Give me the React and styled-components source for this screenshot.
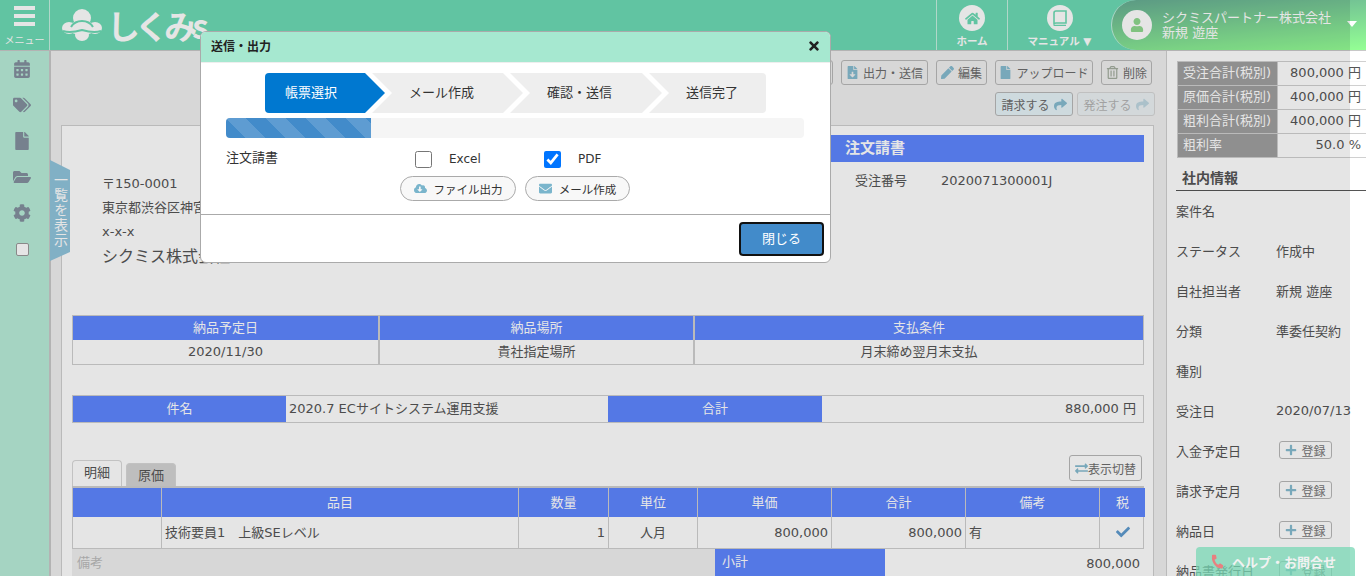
import React from 'react';
import styled, { createGlobalStyle } from 'styled-components';
import {
  FaHome, FaUser, FaCalendarAlt, FaTags, FaFile, FaFolderOpen, FaCog, FaPen, FaRegTrashAlt,
  FaShare, FaPlus, FaCheck, FaTimes, FaEnvelope, FaCloudDownloadAlt, FaPhone, FaExchangeAlt, FaFileDownload,
} from 'react-icons/fa';

const BLUE = '#5e86ff';

const GlobalStyle = createGlobalStyle`
  html, body {
    margin: 0;
    padding: 0;
    background: #fff;
    font-family: "DejaVu Sans", "Noto Sans CJK JP", sans-serif;
    font-size: 13px;
    color: #555;
  }
  * { box-sizing: border-box; }
`;

const Page = styled.div`
  position: relative;
  width: 1366px;
  height: 576px;
  overflow: hidden;
`;

const Header = styled.header`
  display: flex;
  height: 51px;
  background: #6ddbb5;
  border-bottom: 1px solid #c8c8c8;
`;

const MenuButton = styled.div`
  width: 50px;
  border-right: 1px solid #c5f0e0;
  display: flex;
  flex-direction: column;
  align-items: center;
  color: #fff;
  font-size: 10px;
  line-height: 12px;
  padding-top: 6px;
`;

const Burger = styled.div`
  width: 21px;
  height: 20px;
  margin-bottom: 9px;
  border-top: 4px solid #fff;
  border-bottom: 4px solid #fff;
  display: flex;
  align-items: center;
  &::before {
    content: '';
    width: 100%;
    height: 4px;
    background: #fff;
  }
`;

const Logo = styled.div`
  display: flex;
  align-items: center;
  gap: 5px;
  margin-left: 12px;
  color: #fff;
  font-size: 33px;
  font-weight: 700;
  letter-spacing: -5px;
  line-height: 50px;
  font-family: "Noto Sans CJK JP", sans-serif;
`;

const Spacer = styled.div`
  flex: 1;
`;

const NavItem = styled.div`
  width: ${p => p.$width}px;
  border-left: 1px solid #c5f0e0;
  display: flex;
  flex-direction: column;
  align-items: center;
  padding-top: 5px;
  color: #fff;
  font-size: 10.5px;
  font-weight: 700;
  line-height: 12px;
`;

const NavCircle = styled.div`
  width: 26px;
  height: 26px;
  border-radius: 50%;
  background: #fff;
  color: #6ddbb5;
  font-size: 15px;
  display: flex;
  align-items: center;
  justify-content: center;
  margin-bottom: 4px;
`;

const UserPill = styled.div`
  width: 255px;
  height: 50px;
  border-radius: 30px 0 0 30px;
  border-left: 1px solid #c5f0e0;
  background: linear-gradient(175deg, #66ab94, #94ff94);
  display: flex;
  align-items: center;
  padding-left: 10px;
  color: #fff;
  position: relative;
`;

const Avatar = styled.div`
  width: 30px;
  height: 30px;
  border-radius: 50%;
  background: #fff;
  color: #8fd88f;
  font-size: 14px;
  display: flex;
  align-items: center;
  justify-content: center;
  margin-right: 10px;
`;

const UserText = styled.div`
  font-size: 13px;
  line-height: 15px;
`;

const Caret = styled.span`
  position: absolute;
  right: 9px;
  top: 21px;
  border-left: 5px solid transparent;
  border-right: 5px solid transparent;
  border-top: 6px solid #fff;
`;

const Body = styled.div`
  display: flex;
  height: 525px;
`;

const Sidebar = styled.nav`
  width: 51px;
  flex: none;
  background: #b8edd9;
  border-right: 2px solid #c8c8c8;
  display: flex;
  flex-direction: column;
  padding: 9px 0 0 13px;
  gap: 18px;
  color: #84909f;
  font-size: 18px;
  svg { display: block; }
`;

const SideCheck = styled.div`
  width: 13px;
  height: 13px;
  margin: 3px 0 0 3px;
  background: #fff;
  border: 1px solid #999;
  border-radius: 2px;
`;

const ListTab = styled.div`
  position: absolute;
  left: 50px;
  top: 160px;
  width: 20px;
  height: 101px;
  background: #90c4dc;
  clip-path: polygon(0 0, 100% 10px, 100% 92px, 0 100%);
  color: #fff;
  font-size: 14px;
  line-height: 20px;
  letter-spacing: 1px;
  writing-mode: vertical-rl;
  display: flex;
  align-items: center;
  justify-content: center;
`;

const Main = styled.main`
  width: 1115px;
  flex: none;
  background: #f0f0f0;
  padding: 9px 0 0 10px;
  overflow: hidden;
`;

const Toolbar = styled.div`
  display: flex;
  flex-direction: column;
  align-items: flex-end;
  gap: 7px;
  margin-bottom: 9px;
`;

const ToolRow = styled.div`
  display: flex;
  gap: ${p => p.$gap}px;
  margin-right: ${p => p.$right}px;
`;

const ToolButton = styled.div`
  width: ${p => p.$width}px;
  height: 25px;
  border: 1px solid #b8b8b8;
  border-radius: 3px;
  display: flex;
  align-items: center;
  justify-content: center;
  gap: 4px;
  color: #6c6c6c;
  font-size: 12px;
  white-space: nowrap;
  svg { color: ${p => p.$iconColor || '#86bbd0'}; font-size: 13px; }
`;

const ActionButton = styled(ToolButton)`
  height: 24px;
  background: #e6f3f8;
  opacity: ${p => (p.$disabled ? 0.45 : 1)};
`;

const Sheet = styled.section`
  width: 1093px;
  background: #fff;
  border: 1px solid #d0d0d0;
  padding: 9px 9px 0 10px;
`;

const SheetTop = styled.div`
  display: grid;
  grid-template-columns: 1fr 314px;
  height: 134px;
`;

const Address = styled.div`
  padding: 37px 0 0 30px;
  line-height: 24px;
`;

const CompanyName = styled.div`
  font-size: 16px;
  line-height: 26px;
`;

const TitleBar = styled.div`
  height: 27px;
  background: ${BLUE};
  color: #fff;
  font-size: 15px;
  font-weight: 700;
  line-height: 27px;
  padding-left: 15px;
`;

const OrderNo = styled.div`
  display: flex;
  padding: 10px 0 0 25px;
  line-height: 18px;
  span:first-child { width: 86px; }
`;

const InfoGrid = styled.div`
  display: grid;
  grid-template-columns: ${p => p.$cols};
  border: 1px solid #d0d0d0;
  margin-top: ${p => p.$top}px;
`;

const HeadCell = styled.div`
  background: ${BLUE};
  color: #fff;
  text-align: ${p => (p.$indent ? 'left' : 'center')};
  height: ${p => p.$h || 24}px;
  line-height: ${p => p.$lh || p.$h || 24}px;
  border-right: ${p => (p.$split ? `${p.$split}px solid #d0d0d0` : 'none')};
  padding-left: ${p => p.$indent || 0}px;
`;

const Cell = styled.div`
  height: ${p => p.$h || 24}px;
  line-height: ${p => p.$h || 24}px;
  text-align: ${p => p.$align || 'center'};
  padding: 0 ${p => p.$pad || 3}px;
  border-right: ${p => (p.$split ? `${p.$split}px solid #d0d0d0` : 'none')};
  white-space: nowrap;
  overflow: hidden;
`;

const TabRow = styled.div`
  display: flex;
  align-items: flex-end;
  justify-content: space-between;
  height: 33px;
  margin-top: 32px;
  border-bottom: 2px solid #d0d0d0;
`;

const Tabs = styled.div`
  display: flex;
  align-items: flex-end;
  gap: 4px;
`;

const Tab = styled.div`
  width: 50px;
  height: ${p => (p.$active ? 26 : 23)}px;
  line-height: ${p => (p.$active ? 24 : 23)}px;
  text-align: center;
  border: 1px solid #d8d8d8;
  border-bottom: none;
  border-radius: 4px 4px 0 0;
  background: ${p => (p.$active ? '#fff' : '#d4d4d4')};
`;

const SwitchButton = styled(ToolButton)`
  width: 73px;
  height: 26px;
  margin: 0 2px 5px 0;
  gap: 0;
`;

const DetailGrid = styled.div`
  display: grid;
  grid-template-columns: 89px 357px 90px 89px 134px 134px 134px 45px;
  border-left: 1px solid #d0d0d0;
  border-right: 1px solid #d0d0d0;
`;

const TotalGrid = styled.div`
  display: grid;
  grid-template-columns: 643px 170px 1fr;
  border-top: 1px solid #d0d0d0;
`;

const MemoCell = styled.div`
  background: #f0f0f0;
  color: #bbb;
  padding: 3px 5px;
  height: 40px;
`;

const TaxMark = styled.span`
  color: #5f9bcf;
  font-size: 14px;
  vertical-align: -2px;
`;

const Aside = styled.aside`
  flex: 1;
  background: #fff;
  border-left: 1px solid #d0d0d0;
  padding: 10px 0 0 10px;
  overflow: hidden;
`;

const Summary = styled.div`
  display: grid;
  grid-template-columns: 100px 1fr;
  margin-bottom: 8px;
  border-top: 1px solid #d0d0d0;
  border-left: 1px solid #d0d0d0;
`;

const SummaryLabel = styled.div`
  background: #a0a0a0;
  color: #fff;
  height: 24px;
  line-height: 22px;
  padding-left: 5px;
  border-right: 1px solid #d0d0d0;
  border-bottom: 1px solid #d0d0d0;
  white-space: nowrap;
`;

const SummaryValue = styled.div`
  height: 24px;
  line-height: 22px;
  text-align: right;
  padding-right: 5px;
  border-bottom: 1px solid #d0d0d0;
  white-space: nowrap;
`;

const AsideTitle = styled.h3`
  margin: 0 0 -1px -1px;
  padding-left: 6px;
  font-size: 14px;
  line-height: 24px;
  font-weight: 700;
  border-bottom: 1px solid #555;
`;

const InfoRow = styled.div`
  display: flex;
  align-items: center;
  height: 40px;
  margin-left: -1px;
  white-space: nowrap;
  span:first-child { width: 100px; flex: none; }
`;

const AddButton = styled.div`
  width: 53px;
  height: 18px;
  margin-left: 3px;
  border: 1px solid #b8b8b8;
  border-radius: 3px;
  display: flex;
  align-items: center;
  justify-content: center;
  gap: 4px;
  font-size: 12px;
  color: #777;
  svg { color: #86bbd0; font-size: 12px; }
`;

const Overlay = styled.div`
  position: absolute;
  left: 0;
  top: 0;
  width: 1350px;
  height: 576px;
  background: rgba(0, 0, 0, 0.1);
`;

const Modal = styled.div`
  position: absolute;
  left: 200px;
  top: 31px;
  width: 631px;
  height: 232px;
  background: #fff;
  border: 1px solid #aaa;
  border-radius: 6px;
  color: #333;
  overflow: hidden;
`;

const ModalHeader = styled.div`
  display: flex;
  align-items: center;
  justify-content: space-between;
  height: 31px;
  padding: 0 9px 3px 10px;
  background: #a6e8d0;
  border-bottom: 1px solid #eee;
  font-size: 12px;
  font-weight: 700;
  color: #222;
  svg { font-size: 14px; }
`;

const Steps = styled.div`
  display: flex;
  width: 501px;
  height: 40px;
  margin: 10px 0 0 64px;
  border-radius: 4px;
  overflow: hidden;
`;

const Step = styled.div`
  flex: none;
  width: ${p => p.$width}px;
  margin-left: ${p => (p.$first ? 0 : -13)}px;
  padding-left: ${p => (p.$first ? 20 : 37)}px;
  background: ${p => (p.$active ? '#0078d0' : '#eee')};
  color: ${p => (p.$active ? '#fff' : '#333')};
  line-height: 40px;
  clip-path: ${p =>
    p.$first
      ? 'polygon(0 0, calc(100% - 20px) 0, 100% 50%, calc(100% - 20px) 100%, 0 100%)'
      : p.$last
        ? 'polygon(0 0, 100% 0, 100% 100%, 0 100%, 20px 50%)'
        : 'polygon(0 0, calc(100% - 20px) 0, 100% 50%, calc(100% - 20px) 100%, 0 100%, 20px 50%)'};
`;

const Progress = styled.div`
  width: 578px;
  height: 20px;
  margin: 5px 0 0 25px;
  background: #f5f5f5;
  border-radius: 4px;
  overflow: hidden;
`;

const ProgressFill = styled.div`
  height: 100%;
  background-color: #428bca;
  background-image: linear-gradient(
    45deg,
    rgba(255, 255, 255, 0.15) 25%,
    transparent 25%,
    transparent 50%,
    rgba(255, 255, 255, 0.15) 50%,
    rgba(255, 255, 255, 0.15) 75%,
    transparent 75%
  );
  background-size: 40px 40px;
`;

const FormatRow = styled.div`
  display: flex;
  align-items: center;
  margin: 12px 0 0 25px;
  height: 18px;
`;

const FormatLabel = styled.div`
  width: 189px;
  line-height: 16px;
  margin-top: -2px;
`;

const Check = styled.label`
  display: flex;
  align-items: center;
  gap: 17px;
  width: 129px;
  font-size: 12px;
  input {
    width: 17px;
    height: 17px;
    margin: 0;
  }
`;

const PillRow = styled.div`
  display: flex;
  gap: 9px;
  margin: 8px 0 0 199px;
`;

const Pill = styled.div`
  width: ${p => p.$width}px;
  height: 25px;
  border: 1px solid #aaa;
  border-radius: 13px;
  background: #f8f8f8;
  display: flex;
  align-items: center;
  justify-content: center;
  gap: 7px;
  font-size: 11.5px;
  svg { color: #7ab5cc; font-size: 13px; }
`;

const ModalFooter = styled.div`
  display: flex;
  justify-content: flex-end;
  margin-top: 13px;
  padding: 7px 6px 0 0;
  border-top: 1px solid #aaa;
`;

const CloseButton = styled.div`
  width: 85px;
  height: 34px;
  background: #428bca;
  border: 2px solid #111;
  border-radius: 4px;
  color: #fff;
  text-align: center;
  line-height: 30px;
`;

const HelpButton = styled.div`
  position: absolute;
  right: 11px;
  bottom: 0;
  width: 159px;
  height: 29px;
  padding-left: 15px;
  background: rgba(120, 215, 180, 0.75);
  border-radius: 4px 4px 0 0;
  display: flex;
  align-items: center;
  gap: 8px;
  color: #f2f2f2;
  font-size: 13px;
  font-weight: 700;
  white-space: nowrap;
  svg { color: #e88080; font-size: 13px; transform: scaleX(-1) rotate(-10deg); }
`;

function CloudLogo() {
  return (
    <svg width="40" height="32" viewBox="0 0 40 32" fill="#fff">
      <circle cx="20" cy="9" r="9" />
      <ellipse cx="7" cy="19" rx="7" ry="6" />
      <ellipse cx="33" cy="19" rx="7" ry="6" />
      <ellipse cx="20" cy="19" rx="14" ry="7" />
      <ellipse cx="20" cy="26" rx="7" ry="6" />
      <path d="M9 18c3-5 7-6 11-6s8 1 11 6" fill="none" stroke="#6ddbb5" strokeWidth="2" />
      <path d="M1 22c6 2 12 1 19-1 7 2 13 3 19 1" fill="none" stroke="#6ddbb5" strokeWidth="2" />
    </svg>
  );
}

function BookIcon() {
  return (
    <svg width="14" height="16" viewBox="0 0 14 16" fill="none" stroke="#6ddbb5" strokeWidth="1.6">
      <path d="M3 1h10v12H3c-1.200 0-2 .7-2 1.500V3c0-1.200.8-2 2-2z" />
      <path d="M1 14.500c0 .6.800 1 2 1h10" />
    </svg>
  );
}

const detailHeads = ['', '品目', '数量', '単位', '単価', '合計', '備考', '税'];
const addRows = ['入金予定日', '請求予定月', '納品日', '納品書発行日'];

export default function App() {
  return (
    <Page>
      <GlobalStyle />
      <Header>
        <MenuButton>
          <Burger />
          メニュー
        </MenuButton>
        <Logo>
          <CloudLogo />
          しくみs
        </Logo>
        <Spacer />
        <NavItem $width={71}>
          <NavCircle><FaHome /></NavCircle>
          ホーム
        </NavItem>
        <NavItem $width={104}>
          <NavCircle><BookIcon /></NavCircle>
          マニュアル ▼
        </NavItem>
        <UserPill>
          <Avatar><FaUser /></Avatar>
          <UserText>
            シクミスパートナー株式会社
            <br />
            新規 遊座
          </UserText>
          <Caret />
        </UserPill>
      </Header>

      <Body>
        <Sidebar>
          <FaCalendarAlt />
          <FaTags />
          <FaFile />
          <FaFolderOpen />
          <FaCog />
          <SideCheck />
        </Sidebar>

        <Main>
          <Toolbar>
            <ToolRow $gap={8} $right={14}>
              <ToolButton $width={60}>コピー</ToolButton>
              <ToolButton $width={87}><FaFileDownload />出力・送信</ToolButton>
              <ToolButton $width={51}><FaPen />編集</ToolButton>
              <ToolButton $width={98}><FaFile />アップロード</ToolButton>
              <ToolButton $width={51} $iconColor="#a3ad9f"><FaRegTrashAlt />削除</ToolButton>
            </ToolRow>
            <ToolRow $gap={4} $right={11}>
              <ActionButton $width={78}>請求する<FaShare /></ActionButton>
              <ActionButton $width={78} $disabled>発注する<FaShare /></ActionButton>
            </ToolRow>
          </Toolbar>

          <Sheet>
            <SheetTop>
              <Address>
                <div>〒150-0001</div>
                <div>東京都渋谷区神宮前</div>
                <div>x-x-x</div>
                <CompanyName>シクミス株式会社</CompanyName>
              </Address>
              <div>
                <TitleBar>注文請書</TitleBar>
                <OrderNo>
                  <span>受注番号</span>
                  <span>2020071300001J</span>
                </OrderNo>
              </div>
            </SheetTop>

            <InfoGrid $cols="307px 315px 1fr" $top={46}>
              <HeadCell $split={2}>納品予定日</HeadCell>
              <HeadCell $split={2}>納品場所</HeadCell>
              <HeadCell>支払条件</HeadCell>
              <Cell $split={2}>2020/11/30</Cell>
              <Cell $split={2}>貴社指定場所</Cell>
              <Cell>月末締め翌月末支払</Cell>
            </InfoGrid>

            <InfoGrid $cols="213px 322px 214px 1fr" $top={30}>
              <HeadCell $h={26}>件名</HeadCell>
              <Cell $h={26} $align="left">2020.7 ECサイトシステム運用支援</Cell>
              <HeadCell $h={26}>合計</HeadCell>
              <Cell $h={26} $align="right" $pad={7}>880,000 円</Cell>
            </InfoGrid>

            <TabRow>
              <Tabs>
                <Tab $active>明細</Tab>
                <Tab>原価</Tab>
              </Tabs>
              <SwitchButton $width={73}><FaExchangeAlt />表示切替</SwitchButton>
            </TabRow>

            <DetailGrid>
              {detailHeads.map((head, i) => (
                <HeadCell key={i} $h={29} $split={i < 7 ? 1 : 0}>{head}</HeadCell>
              ))}
              <Cell $h={31} $split={1} />
              <Cell $h={31} $split={1} $align="left">技術要員1　上級SEレベル</Cell>
              <Cell $h={31} $split={1} $align="right">1</Cell>
              <Cell $h={31} $split={1}>人月</Cell>
              <Cell $h={31} $split={1} $align="right">800,000</Cell>
              <Cell $h={31} $split={1} $align="right">800,000</Cell>
              <Cell $h={31} $split={1} $align="left">有</Cell>
              <Cell $h={31}><TaxMark><FaCheck /></TaxMark></Cell>
            </DetailGrid>
            <TotalGrid>
              <MemoCell>備考</MemoCell>
              <HeadCell $h={40} $lh={26} $indent={7}>小計</HeadCell>
              <Cell $h={30} $align="right" $pad={4}>800,000</Cell>
            </TotalGrid>
          </Sheet>
        </Main>

        <Aside>
          <Summary>
            <SummaryLabel>受注合計(税別)</SummaryLabel>
            <SummaryValue>800,000 円</SummaryValue>
            <SummaryLabel>原価合計(税別)</SummaryLabel>
            <SummaryValue>400,000 円</SummaryValue>
            <SummaryLabel>粗利合計(税別)</SummaryLabel>
            <SummaryValue>400,000 円</SummaryValue>
            <SummaryLabel>粗利率</SummaryLabel>
            <SummaryValue>50.0 %</SummaryValue>
          </Summary>
          <AsideTitle>社内情報</AsideTitle>
          <InfoRow><span>案件名</span></InfoRow>
          <InfoRow><span>ステータス</span><span>作成中</span></InfoRow>
          <InfoRow><span>自社担当者</span><span>新規 遊座</span></InfoRow>
          <InfoRow><span>分類</span><span>準委任契約</span></InfoRow>
          <InfoRow><span>種別</span></InfoRow>
          <InfoRow><span>受注日</span><span>2020/07/13</span></InfoRow>
          {addRows.map(label => (
            <InfoRow key={label}>
              <span>{label}</span>
              <AddButton><FaPlus />登録</AddButton>
            </InfoRow>
          ))}
        </Aside>
      </Body>

      <ListTab>一覧を表示</ListTab>
      <Overlay />

      <Modal>
        <ModalHeader>
          送信・出力
          <FaTimes />
        </ModalHeader>
        <Steps>
          <Step $first $active $width={120}>帳票選択</Step>
          <Step $width={151}>メール作成</Step>
          <Step $width={152}>確認・送信</Step>
          <Step $last $width={131}>送信完了</Step>
        </Steps>
        <Progress>
          <ProgressFill style={{ width: '25%' }} />
        </Progress>
        <FormatRow>
          <FormatLabel>注文請書</FormatLabel>
          <Check><input type="checkbox" />Excel</Check>
          <Check><input type="checkbox" defaultChecked />PDF</Check>
        </FormatRow>
        <PillRow>
          <Pill $width={116}><FaCloudDownloadAlt />ファイル出力</Pill>
          <Pill $width={105}><FaEnvelope />メール作成</Pill>
        </PillRow>
        <ModalFooter>
          <CloseButton>閉じる</CloseButton>
        </ModalFooter>
      </Modal>

      <HelpButton><FaPhone />ヘルプ・お問合せ</HelpButton>
    </Page>
  );
}
